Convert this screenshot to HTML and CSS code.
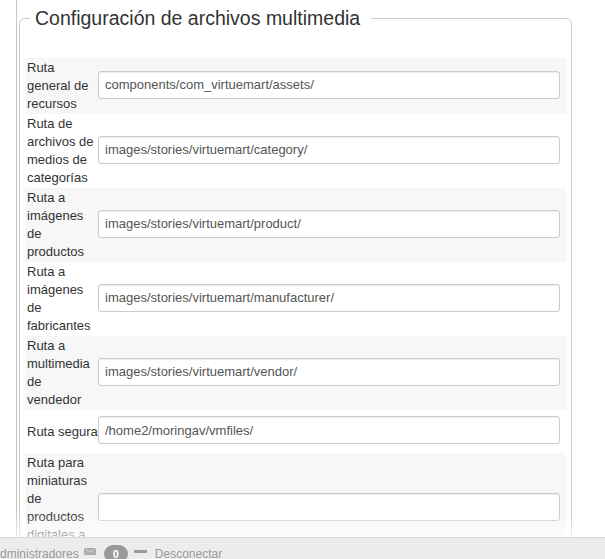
FILE: index.html
```html
<!DOCTYPE html>
<html lang="es">
<head>
<meta charset="utf-8">
<title>Configuración de archivos multimedia</title>
<link rel="stylesheet" href="styles.css">
</head>
<body>
<div class="page">
  <fieldset class="media-config">
    <legend class="media-legend">Configuración de archivos multimedia</legend>
    <div class="rows">
      <div class="row row-odd">
        <label class="key">Ruta general de recursos</label>
        <div class="field"><input type="text" class="path-input" value="components/com_virtuemart/assets/"></div>
      </div>
      <div class="row">
        <label class="key">Ruta de archivos de medios de categorías</label>
        <div class="field"><input type="text" class="path-input" value="images/stories/virtuemart/category/"></div>
      </div>
      <div class="row row-odd">
        <label class="key">Ruta a imágenes de productos</label>
        <div class="field"><input type="text" class="path-input" value="images/stories/virtuemart/product/"></div>
      </div>
      <div class="row">
        <label class="key">Ruta a imágenes de fabricantes</label>
        <div class="field"><input type="text" class="path-input" value="images/stories/virtuemart/manufacturer/"></div>
      </div>
      <div class="row row-odd">
        <label class="key">Ruta a multimedia de vendedor</label>
        <div class="field"><input type="text" class="path-input" value="images/stories/virtuemart/vendor/"></div>
      </div>
      <div class="row">
        <label class="key">Ruta segura</label>
        <div class="field"><input type="text" class="path-input" value="/home2/moringav/vmfiles/"></div>
      </div>
      <div class="row row-odd">
        <label class="key">Ruta para miniaturas de productos digitales a la venta</label>
        <div class="field"><input type="text" class="path-input" value=""></div>
      </div>
    </div>
  </fieldset>
</div>

<div class="status-fade"></div>
<div class="status-bar">
  <span class="status-item status-admins">Administradores</span>
  <svg class="icon-mail" width="12" height="7" viewBox="0 0 12 7" aria-hidden="true">
    <rect x="0" y="0" width="12" height="7" fill="#ababab"/>
    <path d="M0.5 0.5 L6 4 L11.5 0.5" fill="none" stroke="#d6d6d6" stroke-width="1"/>
    <path d="M0.5 6.5 L4.5 3.2 M11.5 6.5 L7.5 3.2" fill="none" stroke="#c4c4c4" stroke-width="0.8"/>
  </svg>
  <span class="badge">0</span>
  <span class="icon-dash" aria-hidden="true"></span>
  <span class="status-item">Desconectar</span>
</div>
</body>
</html>
```

FILE: styles.css
```css
html, body {
  margin: 0;
  padding: 0;
  background: #fff;
}

body {
  font-family: "Liberation Sans", Arial, Helvetica, sans-serif;
  font-size: 13px;
  line-height: 18px;
  color: #333;
}

.page {
  margin-left: 16px;
  padding-left: 2px;
  border-left: 1px solid #c6c6c6;
  width: 553px;
}

.media-config {
  margin: 0;
  padding: 22px 5px 0;
  border: 1px solid #cccccc;
  border-radius: 6px;
  min-width: 0;
}

.media-legend {
  margin-left: 5px;
  padding: 0 11px 0 5px;
  font-size: 19.5px;
  line-height: 36px;
  font-weight: normal;
  color: #333;
}

.rows {
  display: flex;
  flex-direction: column;
}

.row {
  display: grid;
  grid-template-columns: 71px 1fr;
  align-items: center;
  padding: 1px 6px 1px 2px;
  background: #fff;
}

.row-odd {
  background: #f7f7f7;
}

.key {
  display: block;
  color: #333;
  font-size: 13px;
  line-height: 18px;
}

.field {
  display: flex;
}

.path-input {
  box-sizing: border-box;
  width: 100%;
  height: 28px;
  margin: 5px 0 8px;
  padding: 4px 6px;
  border: 1px solid #cccccc;
  border-radius: 3px;
  background: #fff;
  box-shadow: inset 0 1px 1px rgba(0, 0, 0, 0.075);
  font-family: "Liberation Sans", Arial, Helvetica, sans-serif;
  font-size: 13px;
  line-height: 18px;
  color: #555;
  outline: none;
}

.status-fade {
  position: fixed;
  left: 0;
  right: 0;
  bottom: 22px;
  height: 24px;
  background: linear-gradient(to bottom, rgba(255, 255, 255, 0), rgba(255, 255, 255, 0.7));
  pointer-events: none;
}

.status-bar {
  position: fixed;
  left: 0;
  right: 0;
  bottom: 0;
  height: 21px;
  box-sizing: content-box;
  border-top: 1px solid #d8d8d8;
  background: #ececec;
  padding-top: 7px;
  margin-bottom: -7px;
  display: flex;
  align-items: baseline;
  white-space: nowrap;
  overflow: hidden;
  font-size: 12px;
  line-height: 18px;
  color: #999;
}

.status-admins {
  margin-left: -8px;
}

.icon-mail {
  margin-left: 5px;
  align-self: flex-start;
  margin-top: 3px;
}

.badge {
  margin-left: 8px;
  padding: 2px 9px;
  border-radius: 9px;
  background: #999;
  color: #fff;
  font-size: 11px;
  font-weight: bold;
  line-height: 14px;
}

.icon-dash {
  align-self: flex-start;
  margin-top: 5px;
  margin-left: 6px;
  width: 13px;
  height: 3px;
  background: #9a9a9a;
}

.status-item + .status-item,
.icon-dash + .status-item {
  margin-left: 8px;
}
```
